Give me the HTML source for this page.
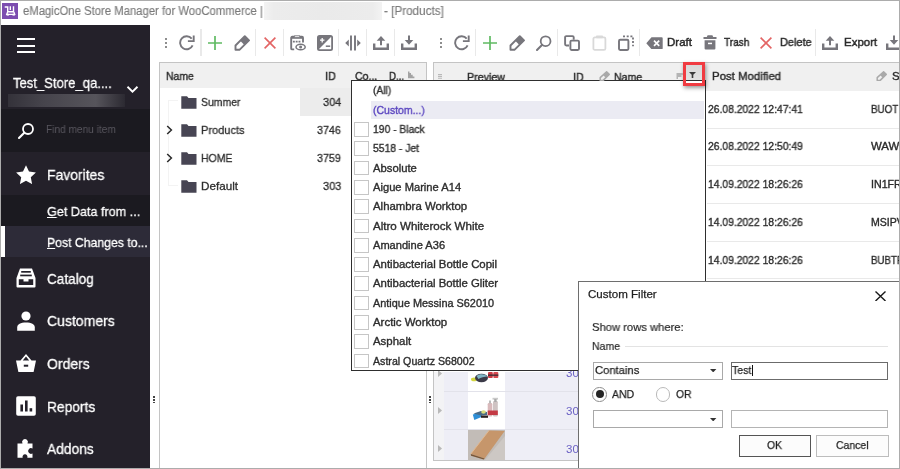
<!DOCTYPE html>
<html><head><meta charset="utf-8"><title>eMagicOne Store Manager for WooCommerce - [Products]</title>
<style>
*{box-sizing:border-box;margin:0;padding:0}
html,body{width:900px;height:469px;overflow:hidden;background:#fff}
body{font-family:"Liberation Sans",sans-serif;font-size:11px;color:#222;position:relative}
.a{position:absolute}
.x{position:absolute;white-space:nowrap;line-height:1;transform-origin:0 50%;display:block;will-change:transform}
.c{position:absolute;overflow:hidden}
</style></head><body>
<div class="a" style="left:2px;top:3px;width:15.5px;height:15.5px;background:#7c4daf;"></div>
<svg class="a" style="left:2px;top:3px;" width="16" height="16" viewBox="0 0 16 16"><path d="M2.700 4h3v4.800h5.800v-5.500" fill="none" stroke="#fff" stroke-width="1.400"/><path d="M8.300 3.300v3.800" stroke="#fff" stroke-width="1.400"/><path d="M5.600 9l-0.900 2.400h8l-0.800 -2.400" fill="none" stroke="#fff" stroke-width="1.300"/><rect x="4.600" y="10.800" width="2.300" height="1.800" fill="#fff"/><rect x="10.500" y="10.800" width="2.300" height="1.800" fill="#fff"/></svg>
<span class="x" style="left:22.60px;top:5.00px;font-size:12px;color:#7a7a7a;transform:scaleX(0.9428);-webkit-text-stroke:0.15px #7a7a7a;">eMagicOne Store Manager for WooCommerce |</span>
<div class="a" style="left:263.5px;top:1.5px;width:118.5px;height:18.5px;background:linear-gradient(90deg,#f3f3f3,#ececec 8%,#eaeaea 50%,#ececec 92%,#f3f3f3);"></div>
<span class="x" style="left:383.60px;top:5.00px;font-size:12px;color:#7a7a7a;transform:scaleX(0.9746);-webkit-text-stroke:0.15px #7a7a7a;">- [Products]</span>
<div class="a" style="left:1px;top:25px;width:149px;height:443px;background:#24212a;"></div>
<div class="a" style="left:17px;top:38px;width:18px;height:2px;background:#fff;"></div>
<div class="a" style="left:17px;top:44.5px;width:18px;height:2px;background:#fff;"></div>
<div class="a" style="left:17px;top:51px;width:18px;height:2px;background:#fff;"></div>
<span class="x" style="left:12.60px;top:75.00px;font-size:15px;color:#fff;transform:scaleX(0.8712);-webkit-text-stroke:0.3px #fff;">Test_Store_qa....</span>
<svg class="a" style="left:126px;top:85px;" width="13" height="9" viewBox="0 0 13 9"><path d="M1.500 1.800l5 4.800l5 -4.800" fill="none" stroke="#fff" stroke-width="1.900"/></svg>
<div class="a" style="left:8px;top:93.5px;width:117px;height:13px;background:linear-gradient(90deg,#34323a,#46444c 30%,#56545b 75%,#2c2a32);"></div>
<div class="a" style="left:1px;top:108.5px;width:149px;height:43.5px;background:#1b1a20;"></div>
<svg class="a" style="left:17px;top:122px;" width="18" height="18" viewBox="0 0 18 18"><circle cx="11" cy="7" r="5" fill="none" stroke="#fff" stroke-width="1.800"/><path d="M7.300 10.700l-5.300 5.300" stroke="#fff" stroke-width="2.100" stroke-linecap="round"/></svg>
<span class="x" style="left:45.60px;top:124.00px;font-size:11px;color:#58565e;transform:scaleX(0.9207);">Find menu item</span>
<svg class="a" style="left:16px;top:164.5px;" width="20" height="19.5" viewBox="0 0 20 19.5"><path d="M10 0.300l3 6.300l6.900 0.900l-5.100 4.700l1.300 6.900l-6.100 -3.400l-6.100 3.400l1.300 -6.900l-5.100 -4.700l6.900 -0.900z" fill="#fff"/></svg>
<span class="x" style="left:47.10px;top:167.00px;font-size:15px;color:#fff;transform:scaleX(0.9289);-webkit-text-stroke:0.3px #fff;">Favorites</span>
<div class="a" style="left:1px;top:195px;width:149px;height:30.5px;background:#1b1a20;"></div>
<span class="x" style="left:46.60px;top:205.00px;font-size:13.5px;color:#fff;transform:scaleX(0.9349);-webkit-text-stroke:0.3px #fff;"><u>G</u>et Data from ...</span>
<div class="a" style="left:1px;top:225.5px;width:149px;height:31.5px;background:#2d2b38;"></div>
<div class="a" style="left:1px;top:225.5px;width:4px;height:31.5px;background:#fff;"></div>
<span class="x" style="left:46.60px;top:236.00px;font-size:13.5px;color:#fff;transform:scaleX(0.9075);-webkit-text-stroke:0.3px #fff;"><u>P</u>ost Changes to...</span>
<svg class="a" style="left:16px;top:268px;" width="20" height="20" viewBox="0 0 20 20"><path d="M4 0.500h12l3.500 9.500v8.500a1 1 0 0 1-1 1h-17a1 1 0 0 1-1-1v-8.500z" fill="#fff"/><rect x="5.200" y="3" width="9.600" height="1.700" fill="#24212a"/><rect x="4.200" y="6.600" width="11.600" height="1.700" fill="#24212a"/><path d="M2.800 11.300h4.700v2.200h5v-2.200h4.700v5.700h-14.400z" fill="#24212a"/></svg>
<span class="x" style="left:47.10px;top:271.00px;font-size:15px;color:#fff;transform:scaleX(0.9052);-webkit-text-stroke:0.3px #fff;">Catalog</span>
<svg class="a" style="left:17px;top:310.5px;" width="18" height="20" viewBox="0 0 18 20"><circle cx="9" cy="5" r="4.600" fill="#fff"/><path d="M0.200 19.800v-3.300c0-3.300 3.500-5 8.800-5s8.800 1.700 8.800 5v3.300z" fill="#fff"/></svg>
<span class="x" style="left:47.10px;top:313.00px;font-size:15px;color:#fff;transform:scaleX(0.9348);-webkit-text-stroke:0.3px #fff;">Customers</span>
<svg class="a" style="left:16px;top:354px;" width="20" height="18" viewBox="0 0 20 18"><path d="M10 0l-5.500 6.500h-4.500l2.400 11.500h15.200l2.400-11.500h-4.500z M10 2.600l3.200 3.900h-6.400z" fill="#fff" fill-rule="evenodd"/><rect x="7.800" y="10.700" width="4.400" height="2" fill="#24212a"/></svg>
<span class="x" style="left:47.10px;top:356.00px;font-size:15px;color:#fff;transform:scaleX(0.9336);-webkit-text-stroke:0.3px #fff;">Orders</span>
<svg class="a" style="left:16px;top:395.5px;" width="20" height="20" viewBox="0 0 20 20"><rect x="0.200" y="0.200" width="19.600" height="19.600" rx="1.800" fill="#fff"/><rect x="4.400" y="8.500" width="2.600" height="7" fill="#24212a"/><rect x="9" y="4.500" width="2.600" height="11" fill="#24212a"/><rect x="13.600" y="12.200" width="2.600" height="3.300" fill="#24212a"/></svg>
<span class="x" style="left:47.10px;top:399.00px;font-size:15px;color:#fff;transform:scaleX(0.9195);-webkit-text-stroke:0.3px #fff;">Reports</span>
<svg class="a" style="left:17px;top:438px;" width="18" height="20" viewBox="0 0 18 20"><path d="M0.500 5.500h5a2.900 2.900 0 1 1 5 0h5v5a2.900 2.900 0 1 0 0 5v4.300h-5.200a2.500 2.500 0 1 0-4.600 0h-5.200z" fill="#fff"/></svg>
<span class="x" style="left:47.10px;top:441.00px;font-size:15px;color:#fff;transform:scaleX(0.9199);-webkit-text-stroke:0.3px #fff;">Addons</span>
<div class="a" style="left:153.2px;top:396.3px;width:1.8px;height:1.8px;background:#444;"></div>
<div class="a" style="left:153.2px;top:399px;width:1.8px;height:1.8px;background:#444;"></div>
<div class="a" style="left:153.2px;top:401.7px;width:1.8px;height:1.8px;background:#444;"></div>
<div class="a" style="left:429.2px;top:396.3px;width:1.8px;height:1.8px;background:#444;"></div>
<div class="a" style="left:429.2px;top:399px;width:1.8px;height:1.8px;background:#444;"></div>
<div class="a" style="left:429.2px;top:401.7px;width:1.8px;height:1.8px;background:#444;"></div>
<div class="a" style="left:164.6px;top:37.9px;width:2px;height:2px;background:#777;border-radius:40%;"></div><div class="a" style="left:164.6px;top:41.8px;width:2px;height:2px;background:#777;border-radius:40%;"></div><div class="a" style="left:164.6px;top:45.7px;width:2px;height:2px;background:#777;border-radius:40%;"></div>
<svg class="a" style="left:179.3px;top:35px;" width="16" height="16" viewBox="0 0 16 16"><path d="M12.7 3.700A6.500 6.500 0 1 0 13.600 10.400" fill="none" stroke="#77767c" stroke-width="1.900"/><path d="M14.7 0.400V6.100H8.900" fill="none" stroke="#77767c" stroke-width="1.900"/></svg>
<div class="a" style="left:200.3px;top:29px;width:1.4px;height:27px;background:#e9e9e9;"></div>
<svg class="a" style="left:208px;top:35.7px;" width="14" height="14" viewBox="0 0 14 14"><path d="M7 0v14M0 7h14" stroke="#60bb63" stroke-width="1.700" fill="none"/></svg>
<svg class="a" style="left:233.8px;top:35px;" width="16" height="16" viewBox="0 0 16 16"><path d="M10.8 1.200l4.200 4.200l-9.300 9.300h-4.200v-4.200z" fill="#fff" stroke="#77767c" stroke-width="1.900" stroke-linejoin="round"/><path d="M10.8 1.200l4.200 4.200l-4.600 4.600l-4.200 -4.200z" fill="#77767c"/></svg>
<div class="a" style="left:255.10000000000002px;top:29px;width:1.4px;height:27px;background:#e9e9e9;"></div>
<svg class="a" style="left:264px;top:36.5px;" width="12" height="12" viewBox="0 0 12 12"><path d="M0.600 0.600l10.8 10.8M11.4 0.600l-10.8 10.8" stroke="#e36464" stroke-width="1.600" fill="none"/></svg>
<div class="a" style="left:283.0px;top:29px;width:1.4px;height:27px;background:#e9e9e9;"></div>
<svg class="a" style="left:290px;top:35px;" width="16" height="16" viewBox="0 0 16 16"><path d="M4.200 14.400h-2a1 1 0 0 1-1-1v-10.600a1 1 0 0 1 1-1h9.800a1 1 0 0 1 1 1v4.600" fill="none" stroke="#77767c" stroke-width="1.900"/><path d="M1.200 1.600h11.800v2.200h-11.800z" fill="#77767c"/><rect x="4.600" y="0.300" width="5" height="1.900" rx="0.500" fill="#fff" stroke="#77767c" stroke-width="0.800"/><path d="M2.900 6.600h1.900M5.700 6.600h1.900M8.500 6.600h1.900" stroke="#77767c" stroke-width="1.600"/><ellipse cx="10.600" cy="12" rx="4.600" ry="2.800" fill="#fff" stroke="#77767c" stroke-width="1.500"/><circle cx="10.600" cy="12" r="1.500" fill="#77767c"/></svg>
<svg class="a" style="left:317px;top:35px;" width="16" height="16" viewBox="0 0 16 16"><rect x="0.900" y="0.900" width="14.200" height="14.200" rx="1.600" fill="#fff" stroke="#77767c" stroke-width="1.800"/><path d="M1 1h14l-14 14z" fill="#77767c"/><path d="M3 5.200h4.400M5.200 3v4.400" stroke="#fff" stroke-width="1.300"/><path d="M8.800 11.200h4.400" stroke="#77767c" stroke-width="1.500"/></svg>
<div class="a" style="left:338.1px;top:29px;width:1.4px;height:27px;background:#e9e9e9;"></div>
<svg class="a" style="left:345px;top:35px;" width="16" height="16" viewBox="0 0 16 16"><path d="M6 0.500v15M10 0.500v15" stroke="#77767c" stroke-width="1.900"/><path d="M3.800 4.500v7l-3.600-3.500zM12.200 4.500v7l3.600-3.500z" fill="#77767c"/></svg>
<div class="a" style="left:366.1px;top:29px;width:1.4px;height:27px;background:#e9e9e9;"></div>
<svg class="a" style="left:373px;top:35px;" width="16" height="16" viewBox="0 0 16 16"><path d="M1.200 8.500v5.200h13.600v-5.200" fill="none" stroke="#77767c" stroke-width="2.400"/><path d="M8 10.200v-7.500" stroke="#77767c" stroke-width="2"/><path d="M3.700 5.800l4.300 -4.800l4.300 4.800z" fill="#77767c"/></svg>
<div class="a" style="left:394.1px;top:29px;width:1.4px;height:27px;background:#e9e9e9;"></div>
<svg class="a" style="left:401px;top:35px;" width="16" height="16" viewBox="0 0 16 16"><path d="M1.200 8.500v5.200h13.600v-5.200" fill="none" stroke="#77767c" stroke-width="2.400"/><path d="M8 0.500v6.500" stroke="#77767c" stroke-width="2"/><path d="M3.700 5l4.300 4.800l4.300 -4.800z" fill="#77767c"/></svg>
<div class="a" style="left:439.6px;top:37.9px;width:2px;height:2px;background:#777;border-radius:40%;"></div><div class="a" style="left:439.6px;top:41.8px;width:2px;height:2px;background:#777;border-radius:40%;"></div><div class="a" style="left:439.6px;top:45.7px;width:2px;height:2px;background:#777;border-radius:40%;"></div>
<svg class="a" style="left:454.3px;top:35px;" width="16" height="16" viewBox="0 0 16 16"><path d="M12.7 3.700A6.500 6.500 0 1 0 13.600 10.400" fill="none" stroke="#77767c" stroke-width="1.900"/><path d="M14.7 0.400V6.100H8.900" fill="none" stroke="#77767c" stroke-width="1.900"/></svg>
<div class="a" style="left:475.0px;top:29px;width:1.4px;height:27px;background:#e9e9e9;"></div>
<svg class="a" style="left:482.8px;top:35.7px;" width="14" height="14" viewBox="0 0 14 14"><path d="M7 0v14M0 7h14" stroke="#60bb63" stroke-width="1.700" fill="none"/></svg>
<svg class="a" style="left:508.5px;top:35px;" width="16" height="16" viewBox="0 0 16 16"><path d="M10.8 1.200l4.200 4.200l-9.300 9.300h-4.200v-4.200z" fill="#fff" stroke="#77767c" stroke-width="1.900" stroke-linejoin="round"/><path d="M10.8 1.200l4.200 4.200l-4.600 4.600l-4.200 -4.200z" fill="#77767c"/></svg>
<svg class="a" style="left:536px;top:35px;" width="16" height="16" viewBox="0 0 16 16"><circle cx="9.600" cy="6.200" r="4.900" fill="none" stroke="#77767c" stroke-width="1.800"/><path d="M6.200 9.800l-5.200 5.200" stroke="#77767c" stroke-width="2" stroke-linecap="round"/></svg>
<div class="a" style="left:556.9px;top:29px;width:1.4px;height:27px;background:#e9e9e9;"></div>
<svg class="a" style="left:564px;top:35px;" width="16" height="16" viewBox="0 0 16 16"><path d="M5 10.500h-2.700a1.200 1.200 0 0 1-1.200-1.200v-7a1.200 1.200 0 0 1 1.200-1.200h6.200a1.200 1.200 0 0 1 1.200 1.200v2.500" fill="none" stroke="#77767c" stroke-width="1.900"/><rect x="6.400" y="5.600" width="8.600" height="9.400" rx="1.200" fill="#fff" stroke="#77767c" stroke-width="1.900"/></svg>
<svg class="a" style="left:591.5px;top:35px;" width="15" height="16" viewBox="0 0 15 16"><rect x="1.400" y="2.400" width="12" height="12.400" rx="1.400" fill="#fff" stroke="#d9d9d9" stroke-width="1.800"/><rect x="4" y="0.500" width="7" height="2.800" rx="0.800" fill="#d9d9d9"/></svg>
<svg class="a" style="left:618px;top:35px;" width="16" height="16" viewBox="0 0 16 16"><path d="M5 1.300h10v10" fill="none" stroke="#77767c" stroke-width="1.800" stroke-dasharray="2 1.700"/><rect x="1" y="4.800" width="9.400" height="10.200" rx="1.200" fill="#fff" stroke="#77767c" stroke-width="1.900"/></svg>
<div class="a" style="left:638.8px;top:29px;width:1.4px;height:27px;background:#e9e9e9;"></div>
<svg class="a" style="left:645.5px;top:36.5px;" width="17" height="12.5" viewBox="0 0 17 12.5"><path d="M5.500 0.300h10.200a1 1 0 0 1 1 1v9.900a1 1 0 0 1-1 1h-10.200l-5.200-5.950z" fill="#77767c"/><path d="M8 3.600l5.200 5.200M13.200 3.600l-5.200 5.200" stroke="#fff" stroke-width="1.700"/></svg>
<span class="x" style="left:667.40px;top:37.00px;font-size:11.5px;color:#2b2b2b;transform:scaleX(0.9991);-webkit-text-stroke:0.45px #2b2b2b;">Draft</span>
<svg class="a" style="left:703px;top:35px;" width="14" height="15" viewBox="0 0 14 15"><path d="M4.600 0.300h4.800l0.800 1.700h3.300v2h-13v-2h3.300z" fill="#77767c"/><path d="M1.600 5.200h10.800v8.400a1 1 0 0 1-1 1h-8.800a1 1 0 0 1-1-1z" fill="#77767c"/><rect x="5" y="7.700" width="4" height="1.500" fill="#fff"/></svg>
<span class="x" style="left:723.80px;top:37.00px;font-size:11.5px;color:#2b2b2b;transform:scaleX(0.8763);-webkit-text-stroke:0.45px #2b2b2b;">Trash</span>
<svg class="a" style="left:760.2px;top:37px;" width="12" height="12" viewBox="0 0 12 12"><path d="M0.600 0.600l10.8 10.8M11.4 0.600l-10.8 10.8" stroke="#e36464" stroke-width="1.600" fill="none"/></svg>
<span class="x" style="left:780.30px;top:37.00px;font-size:11.5px;color:#2b2b2b;transform:scaleX(0.9534);-webkit-text-stroke:0.45px #2b2b2b;">Delete</span>
<div class="a" style="left:815.0px;top:29px;width:1.4px;height:27px;background:#e9e9e9;"></div>
<svg class="a" style="left:822px;top:35px;" width="16" height="16" viewBox="0 0 16 16"><path d="M1.200 8.500v5.200h13.600v-5.200" fill="none" stroke="#77767c" stroke-width="2.400"/><path d="M8 10.200v-7.500" stroke="#77767c" stroke-width="2"/><path d="M3.700 5.800l4.300 -4.800l4.300 4.800z" fill="#77767c"/></svg>
<span class="x" style="left:843.60px;top:37.00px;font-size:11.5px;color:#2b2b2b;transform:scaleX(0.9955);-webkit-text-stroke:0.45px #2b2b2b;">Export</span>
<svg class="a" style="left:886.3px;top:35px;" width="16" height="16" viewBox="0 0 16 16"><path d="M1.200 8.500v5.200h13.600v-5.200" fill="none" stroke="#77767c" stroke-width="2.400"/><path d="M8 0.500v6.500" stroke="#77767c" stroke-width="2"/><path d="M3.700 5l4.300 4.800l4.300 -4.800z" fill="#77767c"/></svg>
<div class="a" style="left:158.5px;top:62px;width:268.4px;height:420px;background:#fff;border:1px solid #c4c4c4;"></div>
<div class="a" style="left:159.5px;top:63px;width:266.4px;height:24.5px;background:#f0f0f0;"></div>
<span class="x" style="left:165.80px;top:71.00px;font-size:11.5px;color:#2b2b2b;transform:scaleX(0.9059);-webkit-text-stroke:0.4px #2b2b2b;">Name</span>
<span class="x" style="left:324.60px;top:71.00px;font-size:11.5px;color:#2b2b2b;transform:scaleX(0.9391);-webkit-text-stroke:0.4px #2b2b2b;">ID</span>
<span class="x" style="left:354.80px;top:71.00px;font-size:11.5px;color:#2b2b2b;transform:scaleX(0.9178);-webkit-text-stroke:0.4px #2b2b2b;">Co...</span>
<span class="x" style="left:388.90px;top:71.00px;font-size:11.5px;color:#2b2b2b;transform:scaleX(0.8440);-webkit-text-stroke:0.4px #2b2b2b;">D...</span>
<svg class="a" style="left:408px;top:71px;" width="8" height="7.5" viewBox="0 0 8 7.5"><path d="M0 0.500h1.500v1.500h1.500v1.700h1.700v1.700h1.700v1.800h-6.400z" fill="#a3a3a3"/></svg>
<div class="a" style="left:300px;top:87.5px;width:51px;height:28px;background:#ececec;"></div>
<div class="a" style="left:168.3px;top:100.5px;width:1px;height:85px;background:#f3f3f3;"></div>
<div class="a" style="left:168.3px;top:100.2px;width:10px;height:1px;background:#f3f3f3;"></div>
<div class="a" style="left:168.3px;top:185px;width:10px;height:1px;background:#f3f3f3;"></div>
<svg class="a" style="left:181px;top:95.75px;" width="16" height="13" viewBox="0 0 16 13"><path d="M0.300 0.300h5.700l1.500 1.700h8v10.700h-15.200z" fill="#474553"/></svg>
<span class="x" style="left:201.40px;top:97.00px;font-size:11.5px;color:#2e2e2e;transform:scaleX(0.9090);-webkit-text-stroke:0.3px #2e2e2e;">Summer</span>
<span class="x" style="left:322.60px;top:97.00px;font-size:11.5px;color:#2e2e2e;transform:scaleX(0.9537);-webkit-text-stroke:0.3px #2e2e2e;">304</span>
<svg class="a" style="left:181px;top:123.75px;" width="16" height="13" viewBox="0 0 16 13"><path d="M0.300 0.300h5.700l1.500 1.700h8v10.700h-15.200z" fill="#474553"/></svg>
<span class="x" style="left:201.40px;top:125.00px;font-size:11.5px;color:#2e2e2e;transform:scaleX(0.9583);-webkit-text-stroke:0.3px #2e2e2e;">Products</span>
<span class="x" style="left:317.10px;top:125.00px;font-size:11.5px;color:#2e2e2e;transform:scaleX(0.9299);-webkit-text-stroke:0.3px #2e2e2e;">3746</span>
<svg class="a" style="left:165.5px;top:125.25px;" width="7" height="10" viewBox="0 0 7 10"><path d="M1.200 1l4.200 4l-4.200 4" fill="none" stroke="#2a2a2a" stroke-width="1.500"/></svg>
<svg class="a" style="left:181px;top:151.75px;" width="16" height="13" viewBox="0 0 16 13"><path d="M0.300 0.300h5.700l1.500 1.700h8v10.700h-15.200z" fill="#474553"/></svg>
<span class="x" style="left:201.40px;top:153.00px;font-size:11.5px;color:#2e2e2e;transform:scaleX(0.9130);-webkit-text-stroke:0.3px #2e2e2e;">HOME</span>
<span class="x" style="left:317.10px;top:153.00px;font-size:11.5px;color:#2e2e2e;transform:scaleX(0.9299);-webkit-text-stroke:0.3px #2e2e2e;">3759</span>
<svg class="a" style="left:165.5px;top:153.25px;" width="7" height="10" viewBox="0 0 7 10"><path d="M1.200 1l4.200 4l-4.200 4" fill="none" stroke="#2a2a2a" stroke-width="1.500"/></svg>
<svg class="a" style="left:181px;top:179.75px;" width="16" height="13" viewBox="0 0 16 13"><path d="M0.300 0.300h5.700l1.500 1.700h8v10.700h-15.200z" fill="#474553"/></svg>
<span class="x" style="left:201.40px;top:181.00px;font-size:11.5px;color:#2e2e2e;transform:scaleX(1.0154);-webkit-text-stroke:0.3px #2e2e2e;">Default</span>
<span class="x" style="left:322.60px;top:181.00px;font-size:11.5px;color:#2e2e2e;transform:scaleX(0.9537);-webkit-text-stroke:0.3px #2e2e2e;">303</span>
<div class="a" style="left:433px;top:62px;width:480px;height:398.5px;background:#fff;border:1px solid #c4c4c4;"></div>
<div class="a" style="left:434px;top:63px;width:465px;height:27.5px;background:#f0f0f0;"></div>
<svg class="a" style="left:437.5px;top:73.5px;" width="4.4" height="6" viewBox="0 0 4.4 6"><path d="M0 0.500h4.400M0 2.400h4.400M0 4.300h4.400" stroke="#b9b9b9" stroke-width="1.100"/></svg>
<span class="x" style="left:466.60px;top:72.00px;font-size:11.5px;color:#2b2b2b;transform:scaleX(0.9290);-webkit-text-stroke:0.4px #2b2b2b;">Preview</span>
<span class="x" style="left:573.30px;top:72.00px;font-size:11.5px;color:#2b2b2b;transform:scaleX(0.9304);-webkit-text-stroke:0.4px #2b2b2b;">ID</span>
<span class="x" style="left:614.00px;top:72.00px;font-size:11.5px;color:#2b2b2b;transform:scaleX(0.9189);-webkit-text-stroke:0.4px #2b2b2b;">Name</span>
<span class="x" style="left:711.60px;top:71.00px;font-size:11.5px;color:#2b2b2b;transform:scaleX(0.9916);-webkit-text-stroke:0.4px #2b2b2b;">Post Modified</span>
<svg class="a" style="left:876px;top:71px;" width="11" height="10" viewBox="0 0 11 10"><path d="M7.600 0.800l2.600 2.600l-6 6h-3v-2.800z" fill="#f0f0f0" stroke="#a9a9a9" stroke-width="1.500" stroke-linejoin="round"/><path d="M7.600 0.800l2.600 2.600l-3.400 3.400l-2.600 -2.600z" fill="#a9a9a9"/></svg>
<span class="x" style="left:891.90px;top:71.00px;font-size:11.5px;color:#2b2b2b;-webkit-text-stroke:0.4px #2b2b2b;">SKU</span>
<div class="a" style="left:444px;top:372px;width:135px;height:88px;background:#eeeef6;"></div>
<div class="a" style="left:434px;top:372px;width:10px;height:88px;background:#f3f3f5;"></div>
<div class="a" style="left:468px;top:372px;width:37px;height:88px;background:#fff;"></div>
<div class="a" style="left:707px;top:127.5px;width:193px;height:1px;background:#e9e9e9;"></div>
<div class="a" style="left:707px;top:165.2px;width:193px;height:1px;background:#e9e9e9;"></div>
<div class="a" style="left:707px;top:202.9px;width:193px;height:1px;background:#e9e9e9;"></div>
<div class="a" style="left:707px;top:240.60000000000002px;width:193px;height:1px;background:#e9e9e9;"></div>
<div class="a" style="left:707px;top:278.3px;width:193px;height:1px;background:#e9e9e9;"></div>
<div class="a" style="left:707px;top:316.0px;width:193px;height:1px;background:#e9e9e9;"></div>
<div class="a" style="left:707px;top:353.70000000000005px;width:193px;height:1px;background:#e9e9e9;"></div>
<div class="a" style="left:707px;top:391.40000000000003px;width:193px;height:1px;background:#e9e9e9;"></div>
<div class="a" style="left:444px;top:391.40000000000003px;width:135px;height:1px;background:#e2e2ea;"></div>
<div class="a" style="left:707px;top:429.1px;width:193px;height:1px;background:#e9e9e9;"></div>
<div class="a" style="left:444px;top:429.1px;width:135px;height:1px;background:#e2e2ea;"></div>
<span class="x" style="left:707.60px;top:104.00px;font-size:10.5px;color:#2b2b2b;transform:scaleX(0.9840);-webkit-text-stroke:0.35px #2b2b2b;">26.08.2022 12:47:41</span>
<span class="x" style="left:870.60px;top:104.00px;font-size:10.5px;color:#2b2b2b;transform:scaleX(0.9358);-webkit-text-stroke:0.35px #2b2b2b;">BUOT</span>
<span class="x" style="left:707.60px;top:141.00px;font-size:10.5px;color:#2b2b2b;transform:scaleX(0.9840);-webkit-text-stroke:0.35px #2b2b2b;">26.08.2022 12:50:49</span>
<span class="x" style="left:870.60px;top:141.00px;font-size:10.5px;color:#2b2b2b;transform:scaleX(1.0865);-webkit-text-stroke:0.35px #2b2b2b;">WAW</span>
<span class="x" style="left:707.60px;top:179.00px;font-size:10.5px;color:#2b2b2b;transform:scaleX(0.9840);-webkit-text-stroke:0.35px #2b2b2b;">14.09.2022 18:26:26</span>
<span class="x" style="left:870.60px;top:179.00px;font-size:10.5px;color:#2b2b2b;transform:scaleX(1.0150);-webkit-text-stroke:0.35px #2b2b2b;">IN1FR</span>
<span class="x" style="left:707.60px;top:217.00px;font-size:10.5px;color:#2b2b2b;transform:scaleX(0.9840);-webkit-text-stroke:0.35px #2b2b2b;">14.09.2022 18:26:26</span>
<span class="x" style="left:870.60px;top:217.00px;font-size:10.5px;color:#2b2b2b;transform:scaleX(1.0034);-webkit-text-stroke:0.35px #2b2b2b;">MSIPV</span>
<span class="x" style="left:707.60px;top:255.00px;font-size:10.5px;color:#2b2b2b;transform:scaleX(0.9840);-webkit-text-stroke:0.35px #2b2b2b;">14.09.2022 18:26:26</span>
<span class="x" style="left:870.60px;top:255.00px;font-size:10.5px;color:#2b2b2b;transform:scaleX(0.9238);-webkit-text-stroke:0.35px #2b2b2b;">BUBTF</span>
<svg class="a" style="left:438px;top:369.55px;" width="4" height="7" viewBox="0 0 4 7"><path d="M0 0l4 3.500l-4 3.500z" fill="#b9b9b9"/></svg>
<span class="x" style="left:566.10px;top:368.00px;font-size:11.5px;color:#6a60c4;">304</span>
<svg class="a" style="left:438px;top:407.25000000000006px;" width="4" height="7" viewBox="0 0 4 7"><path d="M0 0l4 3.500l-4 3.500z" fill="#b9b9b9"/></svg>
<span class="x" style="left:566.10px;top:406.00px;font-size:11.5px;color:#6a60c4;">304</span>
<svg class="a" style="left:438px;top:444.95000000000005px;" width="4" height="7" viewBox="0 0 4 7"><path d="M0 0l4 3.500l-4 3.500z" fill="#b9b9b9"/></svg>
<span class="x" style="left:566.10px;top:444.00px;font-size:11.5px;color:#6a60c4;">304</span>
<svg class="a" style="left:468px;top:372px;" width="37" height="19" viewBox="0 0 37 19"><ellipse cx="6" cy="7.400" rx="3" ry="1.800" fill="#d3d640"/><ellipse cx="13.500" cy="6" rx="6.500" ry="4.200" fill="#3b3a48"/><path d="M8.500 4c3-2.500 8-2.500 11 0.500c-3 0-7 1-9 2.500z" fill="#7fb4c4"/><rect x="20" y="0" width="4.800" height="6" rx="1" fill="#cf3a44"/><rect x="25.300" y="0" width="5" height="6" rx="1" fill="#d94a52"/><rect x="20" y="2.500" width="10.300" height="1.300" fill="#3a2a30"/></svg>
<svg class="a" style="left:468px;top:392.5px;" width="37" height="36" viewBox="0 0 37 36"><rect x="19.700" y="10" width="4.600" height="13.500" rx="1.200" fill="#d9b9bb"/><rect x="25" y="8" width="4.800" height="15.500" rx="1.200" fill="#cfc3c3"/><rect x="19.700" y="17.500" width="10.100" height="4.500" fill="#c43a44"/><rect x="24.500" y="4.800" width="5.500" height="1.800" fill="#c9c9c9"/><rect x="26.200" y="6" width="2.400" height="3" fill="#aaa"/><rect x="21" y="7.500" width="2" height="3" fill="#bbb"/><path d="M4.800 21.500l7.500 -2l1.700 4.300l-7.700 3.200z" fill="#2f8fd6"/><path d="M5.500 20.500l7.500 -2.500l6 1v3l-6 0.500z" fill="#4a6a86"/><ellipse cx="15.500" cy="19" rx="2.300" ry="1.800" fill="#d9dc7a"/><path d="M13 22.500h7v2.300h-7z" fill="#2a2020"/></svg>
<svg class="a" style="left:468px;top:429.5px;" width="37" height="30" viewBox="0 0 37 30"><rect width="37" height="30" fill="#c2bcb7"/><path d="M37 6v24h-20z" fill="#cdc8c4"/><path d="M21 0.500l15.700 0.500l-20 27.500l-13.900 -4.500z" fill="#c6966b"/><path d="M2.800 24l13.900 4.500l-1 1l-12.700 -3.700z" fill="#7a5636"/><path d="M21 0.500l-18.200 23.500" stroke="#e0b890" stroke-width="1"/></svg>
<div class="a" style="left:351px;top:80.1px;width:355.3px;height:291.3px;background:#fff;border:1.400px solid #2e2e2e;"></div>
<div class="a" style="left:371.4px;top:100.8px;width:333px;height:18.6px;background:#ebebf3;"></div>
<span class="x" style="left:373.30px;top:85.00px;font-size:10.5px;color:#2e2e2e;transform:scaleX(0.9694);-webkit-text-stroke:0.35px #2e2e2e;">(All)</span>
<span class="x" style="left:373.30px;top:105.00px;font-size:10.5px;color:#5a45c0;transform:scaleX(0.9957);-webkit-text-stroke:0.35px #5a45c0;">(Custom...)</span>
<span class="x" style="left:373.30px;top:124.00px;font-size:10.5px;color:#2e2e2e;transform:scaleX(0.9842);-webkit-text-stroke:0.35px #2e2e2e;">190 - Black</span>
<div class="a" style="left:354.2px;top:122.0px;width:14.8px;height:14.8px;background:#fff;border:1px solid #c6c6c6;"></div>
<span class="x" style="left:373.30px;top:143.00px;font-size:10.5px;color:#2e2e2e;transform:scaleX(0.9849);-webkit-text-stroke:0.35px #2e2e2e;">5518 - Jet</span>
<div class="a" style="left:354.2px;top:141.3px;width:14.8px;height:14.8px;background:#fff;border:1px solid #c6c6c6;"></div>
<span class="x" style="left:373.30px;top:163.00px;font-size:10.5px;color:#2e2e2e;transform:scaleX(1.0716);-webkit-text-stroke:0.35px #2e2e2e;">Absolute</span>
<div class="a" style="left:354.2px;top:160.6px;width:14.8px;height:14.8px;background:#fff;border:1px solid #c6c6c6;"></div>
<span class="x" style="left:373.30px;top:182.00px;font-size:10.5px;color:#2e2e2e;transform:scaleX(1.0628);-webkit-text-stroke:0.35px #2e2e2e;">Aigue Marine A14</span>
<div class="a" style="left:354.2px;top:179.9px;width:14.8px;height:14.8px;background:#fff;border:1px solid #c6c6c6;"></div>
<span class="x" style="left:373.30px;top:201.00px;font-size:10.5px;color:#2e2e2e;transform:scaleX(1.0845);-webkit-text-stroke:0.35px #2e2e2e;">Alhambra Worktop</span>
<div class="a" style="left:354.2px;top:199.2px;width:14.8px;height:14.8px;background:#fff;border:1px solid #c6c6c6;"></div>
<span class="x" style="left:373.30px;top:221.00px;font-size:10.5px;color:#2e2e2e;transform:scaleX(1.1005);-webkit-text-stroke:0.35px #2e2e2e;">Altro Whiterock White</span>
<div class="a" style="left:354.2px;top:218.5px;width:14.8px;height:14.8px;background:#fff;border:1px solid #c6c6c6;"></div>
<span class="x" style="left:373.30px;top:240.00px;font-size:10.5px;color:#2e2e2e;transform:scaleX(1.0554);-webkit-text-stroke:0.35px #2e2e2e;">Amandine A36</span>
<div class="a" style="left:354.2px;top:237.8px;width:14.8px;height:14.8px;background:#fff;border:1px solid #c6c6c6;"></div>
<span class="x" style="left:373.30px;top:259.00px;font-size:10.5px;color:#2e2e2e;transform:scaleX(1.0847);-webkit-text-stroke:0.35px #2e2e2e;">Antibacterial Bottle Copil</span>
<div class="a" style="left:354.2px;top:257.1px;width:14.8px;height:14.8px;background:#fff;border:1px solid #c6c6c6;"></div>
<span class="x" style="left:373.30px;top:278.00px;font-size:10.5px;color:#2e2e2e;transform:scaleX(1.0825);-webkit-text-stroke:0.35px #2e2e2e;">Antibacterial Bottle Gliter</span>
<div class="a" style="left:354.2px;top:276.4px;width:14.8px;height:14.8px;background:#fff;border:1px solid #c6c6c6;"></div>
<span class="x" style="left:373.30px;top:298.00px;font-size:10.5px;color:#2e2e2e;transform:scaleX(1.0373);-webkit-text-stroke:0.35px #2e2e2e;">Antique Messina S62010</span>
<div class="a" style="left:354.2px;top:295.70000000000005px;width:14.8px;height:14.8px;background:#fff;border:1px solid #c6c6c6;"></div>
<span class="x" style="left:373.30px;top:317.00px;font-size:10.5px;color:#2e2e2e;transform:scaleX(1.0885);-webkit-text-stroke:0.35px #2e2e2e;">Arctic Worktop</span>
<div class="a" style="left:354.2px;top:315.0px;width:14.8px;height:14.8px;background:#fff;border:1px solid #c6c6c6;"></div>
<span class="x" style="left:373.30px;top:336.00px;font-size:10.5px;color:#2e2e2e;transform:scaleX(1.0876);-webkit-text-stroke:0.35px #2e2e2e;">Asphalt</span>
<div class="a" style="left:354.2px;top:334.3px;width:14.8px;height:14.8px;background:#fff;border:1px solid #c6c6c6;"></div>
<span class="x" style="left:373.30px;top:356.00px;font-size:10.5px;color:#2e2e2e;transform:scaleX(1.0120);-webkit-text-stroke:0.35px #2e2e2e;">Astral Quartz S68002</span>
<div class="a" style="left:354.2px;top:353.6px;width:14.8px;height:14.8px;background:#fff;border:1px solid #c6c6c6;"></div>
<div class="a" style="left:686px;top:65px;width:16.5px;height:15.4px;background:linear-gradient(180deg,#d9d9d9,#e2e2e2);"></div>
<div class="a" style="left:683px;top:62px;width:22px;height:24px;border:3px solid #f03b41;box-shadow:0.500px 2px 4px rgba(0,0,0,0.400);"></div>
<svg class="a" style="left:689.3px;top:71.8px;" width="7" height="6" viewBox="0 0 7 6"><path d="M0 0h7l-2.700 2.800v3.200h-1.600v-3.200z" fill="#3a3a3a"/></svg>
<svg class="a" style="left:676.3px;top:73.2px;" width="7" height="6" viewBox="0 0 7 6"><path d="M0.500 0h6.500v2h-1.500v2h-3.500v2h-1.500z" fill="#b4b4b4"/></svg>
<svg class="a" style="left:598.5px;top:71px;" width="11" height="10" viewBox="0 0 11 10"><path d="M7.600 0.800l2.600 2.600l-6 6h-3v-2.800z" fill="#f0f0f0" stroke="#a9a9a9" stroke-width="1.500" stroke-linejoin="round"/><path d="M7.600 0.800l2.600 2.600l-3.400 3.400l-2.600 -2.600z" fill="#a9a9a9"/></svg>
<div class="a" style="left:578.2px;top:281px;width:330px;height:200px;background:#fff;border:1.200px solid #6e6e6e;"></div>
<span class="x" style="left:588.00px;top:289.00px;font-size:11.5px;color:#1f1f1f;transform:scaleX(1.0048);-webkit-text-stroke:0.25px #1f1f1f;">Custom Filter</span>
<svg class="a" style="left:875px;top:290.5px;" width="11" height="10.5" viewBox="0 0 11 10.5"><path d="M0.500 0.500l10 9.500M10.500 0.500l-10 9.500" stroke="#1a1a1a" stroke-width="1.400"/></svg>
<span class="x" style="left:592.00px;top:322.00px;font-size:11.5px;color:#2a2a2a;transform:scaleX(0.9759);-webkit-text-stroke:0.2px #2a2a2a;">Show rows where:</span>
<span class="x" style="left:592.00px;top:341.00px;font-size:11.5px;color:#2a2a2a;transform:scaleX(0.9157);-webkit-text-stroke:0.2px #2a2a2a;">Name</span>
<div class="a" style="left:625px;top:346px;width:263px;height:1px;background:#e3e3e3;"></div>
<div class="a" style="left:593px;top:361.5px;width:130px;height:18.5px;background:#fff;border:1px solid #a9a9a9;"></div>
<span class="x" style="left:594.80px;top:365.00px;font-size:11.5px;color:#1f1f1f;transform:scaleX(0.9760);-webkit-text-stroke:0.25px #1f1f1f;">Contains</span>
<svg class="a" style="left:710.3px;top:369px;" width="6.4" height="3.4" viewBox="0 0 6.4 3.4"><path d="M0 0h6.400l-3.200 3.400z" fill="#333"/></svg>
<div class="a" style="left:731px;top:361.5px;width:157px;height:18.5px;background:#fff;border:1.200px solid #6b6b6b;"></div>
<span class="x" style="left:732.40px;top:365.00px;font-size:11.5px;color:#1f1f1f;transform:scaleX(0.9150);-webkit-text-stroke:0.25px #1f1f1f;">Test</span>
<div class="a" style="left:752px;top:364.5px;width:1px;height:11.5px;background:#111;"></div>
<div class="a" style="left:592.4px;top:387px;width:14.6px;height:14.6px;background:#fff;border:1px solid #8c8c8c;border-radius:50%;"></div>
<div class="a" style="left:595.6px;top:390.2px;width:8.2px;height:8.2px;background:#262626;border-radius:50%;"></div>
<span class="x" style="left:612.30px;top:389.00px;font-size:11.5px;color:#1f1f1f;transform:scaleX(0.9102);-webkit-text-stroke:0.25px #1f1f1f;">AND</span>
<div class="a" style="left:655.5px;top:387px;width:14.6px;height:14.6px;background:#fff;border:1px solid #b9b9b9;border-radius:50%;"></div>
<span class="x" style="left:675.90px;top:389.00px;font-size:11.5px;color:#1f1f1f;transform:scaleX(0.8986);-webkit-text-stroke:0.25px #1f1f1f;">OR</span>
<div class="a" style="left:593px;top:410px;width:130px;height:18px;background:#fff;border:1px solid #a9a9a9;"></div>
<svg class="a" style="left:710.3px;top:417.5px;" width="6.4" height="3.4" viewBox="0 0 6.4 3.4"><path d="M0 0h6.400l-3.200 3.400z" fill="#333"/></svg>
<div class="a" style="left:731px;top:410px;width:157px;height:18px;background:#fff;border:1px solid #b4b4b4;"></div>
<div class="a" style="left:738.5px;top:435px;width:72.3px;height:22px;background:#fcfcfc;border:1.300px solid #555;"></div>
<span class="x" style="left:766.60px;top:440.00px;font-size:11.5px;color:#1f1f1f;transform:scaleX(0.9023);-webkit-text-stroke:0.25px #1f1f1f;">OK</span>
<div class="a" style="left:816.3px;top:435px;width:72.3px;height:22px;background:#fcfcfc;border:1px solid #bdbdbd;"></div>
<span class="x" style="left:835.90px;top:440.00px;font-size:11.5px;color:#1f1f1f;transform:scaleX(0.9103);-webkit-text-stroke:0.25px #1f1f1f;">Cancel</span>
<div class="a" style="left:0px;top:0px;width:900px;height:469px;border:1px solid #acacac;border-right-width:1.500px;"></div>
</body></html>
